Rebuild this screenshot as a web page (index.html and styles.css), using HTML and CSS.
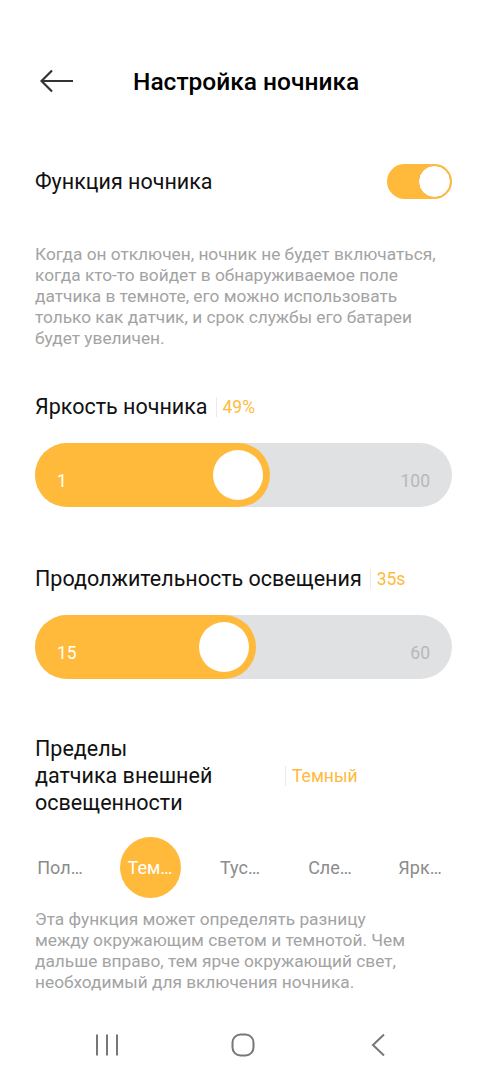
FILE: index.html
```html
<!DOCTYPE html>
<html lang="ru">
  <head>
    <meta charset="UTF-8" />
    <meta name="viewport" content="width=device-width, initial-scale=1.0" />
    <title>Настройка ночника</title>
    <link rel="stylesheet" href="styles.css">
  </head>
  <body>
    <header class="topbar">
      <svg class="back" width="34" height="24" viewBox="0 0 34 24">
        <path d="M33 12H2M12 1.5L1.5 12L12 22.5" fill="none" stroke="#333" stroke-width="2.2" />
      </svg>
      <h1>Настройка ночника</h1>
    </header>

    <main>
      <div class="toggle-row">
        <span class="label">Функция ночника</span>
        <div class="switch"><span class="switch-knob"></span></div>
      </div>

      <p class="hint hint-top">
        Когда он отключен, ночник не будет включаться, когда кто-то войдет в обнаруживаемое поле датчика в темноте, его можно использовать только как датчик, и срок службы его батареи будет увеличен.
      </p>

      <div class="title-row title-brightness">
        <span class="label">Яркость ночника</span>
        <span class="value">49%</span>
      </div>
      <div class="slider">
        <div class="slider-fill" style="width: 235px"><span class="slider-knob"></span></div>
        <span class="slider-min">1</span>
        <span class="slider-max">100</span>
      </div>

      <div class="title-row title-duration">
        <span class="label">Продолжительность освещения</span>
        <span class="value">35s</span>
      </div>
      <div class="slider">
        <div class="slider-fill" style="width: 221px"><span class="slider-knob"></span></div>
        <span class="slider-min">15</span>
        <span class="slider-max">60</span>
      </div>

      <div class="title-row title-sensor">
        <span class="label label-wrap">Пределы<br />датчика внешней<br />освещенности</span>
        <span class="value">Темный</span>
      </div>

      <div class="levels">
        <span class="level">Пол…</span>
        <span class="level level-active">Тем…</span>
        <span class="level">Тус…</span>
        <span class="level">Сле…</span>
        <span class="level">Ярк…</span>
      </div>

      <p class="hint hint-bottom">
        Эта функция может определять разницу между окружающим светом и темнотой. Чем дальше вправо, тем ярче окружающий свет, необходимый для включения ночника.
      </p>
    </main>

    <nav class="navbar">
      <span class="nav-item">
        <svg width="24" height="24" viewBox="0 0 24 24">
          <path d="M2 1.5V22.5M12 1.5V22.5M22 1.5V22.5" stroke="#777" stroke-width="2" fill="none" />
        </svg>
      </span>
      <span class="nav-item">
        <svg width="24" height="24" viewBox="0 0 24 24">
          <rect x="1.5" y="1.5" width="21" height="21" rx="8" stroke="#777" stroke-width="2" fill="none" />
        </svg>
      </span>
      <span class="nav-item">
        <svg width="24" height="24" viewBox="0 0 24 24">
          <path d="M17 1.5L6 12L17 22.5" stroke="#777" stroke-width="2" fill="none" />
        </svg>
      </span>
    </nav>
  </body>
</html>
```

FILE: styles.css
```css
body {
  font-family: Roboto, "Noto Sans", Arial, sans-serif;
  margin: 0;
  padding: 0;
  background-color: #fff;
  color: #111;
  width: 486px;
}

.topbar {
  display: flex;
  align-items: center;
  height: 50px;
  margin-top: 56px;
  padding-left: 40px;
}

.topbar h1 {
  margin: 0 0 0 59px;
  font-size: 24.5px;
  font-weight: 500;
  color: #000;
}

main {
  padding: 0 34px 0 35px;
}

.label {
  font-size: 21.5px;
  color: #111;
}

.toggle-row {
  display: flex;
  justify-content: space-between;
  align-items: center;
  margin-top: 58px;
  height: 35px;
}

.switch {
  width: 65px;
  height: 35px;
  box-sizing: border-box;
  padding: 1px;
  border-radius: 18px;
  background-color: #ffba3b;
  display: flex;
  justify-content: flex-end;
}

.switch-knob {
  width: 33px;
  height: 33px;
  box-sizing: border-box;
  border-radius: 50%;
  background-color: #fff;
  border: 1px solid #f3b23a;
}

.hint {
  margin: 0;
  font-size: 17.3px;
  line-height: 21px;
  color: #a3a3a3;
}

.hint-top {
  margin-top: 45px;
}

.title-row {
  display: flex;
  align-items: center;
  line-height: 28px;
}

.title-row .value {
  font-size: 17.5px;
  color: #ffba3b;
  border-left: 1px solid #ebebeb;
  line-height: 20px;
  padding-left: 6px;
  margin-left: 8px;
}

.title-brightness {
  margin-top: 44px;
}

.title-duration {
  margin-top: 58px;
}

.title-sensor {
  margin-top: 56px;
  line-height: 27px;
}

.label-wrap {
  width: 250px;
}

.title-sensor .value {
  margin-left: 0;
}

.slider {
  position: relative;
  margin-top: 22px;
  height: 64px;
  border-radius: 32px;
  background-color: #dfe1e3;
  display: flex;
  justify-content: space-between;
  align-items: center;
  padding: 12px 22px 0;
  box-sizing: border-box;
  font-size: 17.5px;
}

.slider-fill {
  position: absolute;
  left: 0;
  top: 0;
  height: 64px;
  border-radius: 32px;
  background-color: #ffba3b;
}

.slider-knob {
  position: absolute;
  right: 7px;
  top: 7px;
  width: 50px;
  height: 50px;
  border-radius: 50%;
  background-color: #fff;
}

.slider-min {
  position: relative;
  color: #fff;
}

.slider-max {
  position: relative;
  color: #b8b8b8;
}

.levels {
  display: grid;
  grid-template-columns: repeat(5, 90px);
  margin: 21px 0 0 -20px;
  height: 61px;
  align-items: center;
  justify-items: center;
}

.level {
  font-size: 18px;
  color: #8c8c8c;
}

.level-active {
  width: 61px;
  height: 61px;
  border-radius: 50%;
  background-color: #ffba3b;
  color: #fff;
  display: flex;
  align-items: center;
  justify-content: center;
}

.hint-bottom {
  margin-top: 11px;
  max-width: 384px;
}

.navbar {
  display: flex;
  justify-content: center;
  margin-top: 40px;
}

.nav-item {
  width: 136px;
  display: flex;
  justify-content: center;
}
```
